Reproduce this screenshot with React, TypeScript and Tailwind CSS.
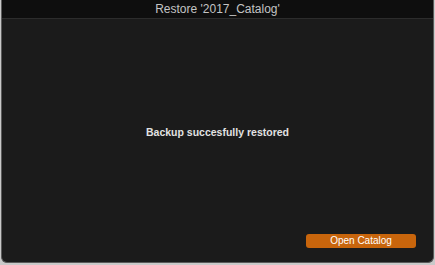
import React from 'react';

const App: React.FC = () => {
  return (
    <div
      className="w-[435px] h-[265px] bg-[#c9c9c9] pl-[1px] pr-[1px] pb-[2px]"
      style={{ fontFamily: '"Liberation Sans", Arial, sans-serif' }}
    >
      <div className="h-full flex flex-col bg-[#1b1b1b] rounded-b-[6px] overflow-hidden border-x border-b border-[#5a5a5a]">
        {/* Title bar */}
        <div className="h-[19px] shrink-0 bg-[#0e0e0e] border-b border-[#2c2c2c] flex items-center justify-center">
          <span className="text-[12px] text-[#c4c4c4] leading-none">Restore '2017_Catalog'</span>
        </div>

        {/* Body */}
        <div className="flex-1 flex flex-col">
          <div className="h-[108px]" />
          <div className="text-center text-[10.5px] font-bold text-[#e2e2e2] leading-none">
            Backup succesfully restored
          </div>
          <div className="flex-1" />
          <div className="flex justify-end pr-[17px] pb-[14px]">
            <button className="w-[110px] h-[14px] rounded-[3px] bg-[#c8650c] text-white text-[10px] leading-none flex items-center justify-center">
              Open Catalog
            </button>
          </div>
        </div>
      </div>
    </div>
  );
};

export default App;
